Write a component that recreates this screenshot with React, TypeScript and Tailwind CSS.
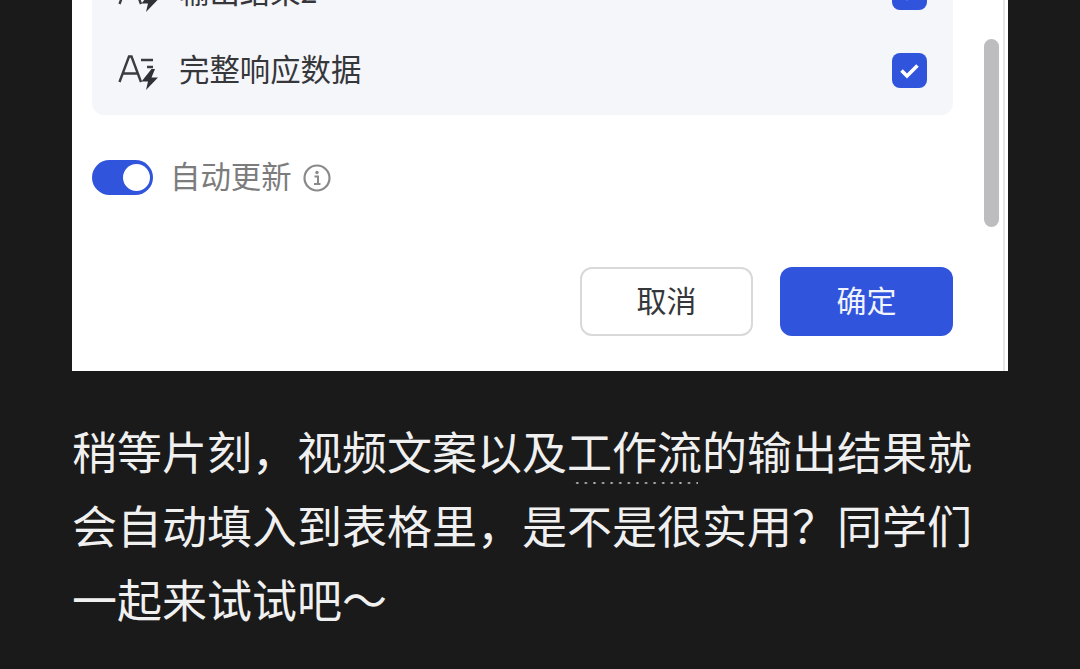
const cjk = "font-['Noto_Sans_CJK_SC','Noto_Sans',sans-serif]";

function FieldIcon() {
  return (
    <svg width="42" height="40" viewBox="0 0 42 40" fill="none" className="shrink-0">
      <path d="M2.5 32 L12 6.5 L14.5 6.5 L24 32 M6 23.5 H20.5" stroke="#3a3c40" strokeWidth="2.4" />
      <path d="M24 10 H36 M30 17 H36" stroke="#3a3c40" strokeWidth="2.4" />
      <path d="M34.5 19 L24.5 31.5 H31 L29 40 L41 27.5 H34.5 L38 19 Z" fill="#2f3136" />
    </svg>
  );
}

function CheckBox() {
  return (
    <div className="w-[35px] h-[35px] rounded-lg bg-[#3054dc] flex items-center justify-center">
      <svg width="21" height="17" viewBox="0 0 21 17" fill="none">
        <path d="M2.5 8.5 L8 14 L18.5 3.5" stroke="#fff" strokeWidth="3.6" />
      </svg>
    </div>
  );
}

function Row({ label }: { label: string }) {
  return (
    <div className="h-[78px] flex items-center justify-between pl-[25px] pr-[26px]">
      <div className="flex items-center gap-[20px]">
        <FieldIcon />
        <span className="pb-[4px] text-[30.4px] leading-none text-[#35373b]">{label}</span>
      </div>
      <CheckBox />
    </div>
  );
}

export default function App() {
  return (
    <div className={`h-[669px] w-[1080px] overflow-hidden bg-[#1a1a1a] ${cjk}`}>
      <div className="relative ml-[72px] w-[936px] h-[371px] overflow-hidden bg-white">
        <div className="-mt-[47px] pl-[20px] pr-[55px]">
          <div className="rounded-[12px] bg-[#f5f6f9] pb-[6px]">
            <Row label="输出结果2" />
            <Row label="完整响应数据" />
          </div>

          <div className="mt-[45px] flex items-center h-[35px]">
            <div className="w-[61px] h-[35px] rounded-full bg-[#3054dc] flex items-center justify-end pr-[3px]">
              <div className="w-[27px] h-[27px] rounded-full bg-white" />
            </div>
            <span className="ml-[17px] pb-[4px] text-[30.4px] leading-none text-[#7c7c7c]">自动更新</span>
            <svg width="28" height="28" viewBox="0 0 28 28" fill="none" className="ml-[11px]">
              <circle cx="14" cy="14" r="12.5" stroke="#8a8a8a" strokeWidth="2.2" />
              <circle cx="14" cy="8.5" r="1.7" fill="#8a8a8a" />
              <path d="M11.5 12.5 H15 V19.5 M11 20 H17.5" stroke="#8a8a8a" strokeWidth="2" />
            </svg>
          </div>

          <div className="mt-[72px] flex justify-end gap-[27px]">
            <button className="w-[173px] h-[69px] pb-[4px] rounded-[12px] border-2 border-[#d9d9d9] bg-white text-[30px] text-[#35373b]">
              取消
            </button>
            <button className="w-[173px] h-[69px] pb-[4px] rounded-[12px] bg-[#3054dc] text-[30px] text-[#f2f4fd]">
              确定
            </button>
          </div>
        </div>

        <div className="absolute left-[912px] top-[39px] w-[15px] h-[188px] rounded-full bg-[#bdbdbf]" />
        <div className="absolute left-[931px] top-0 w-[2px] h-full bg-[#e6e6e6]" />
      </div>

      <p className="mt-[43px] mx-[72px] text-[45px] leading-[74px] text-[#f0f0f0]">
        稍等片刻，视频文案以及
        <span className="relative">
          工作流
          <span className="absolute left-[6px] right-[4px] -bottom-[1px] h-[2px] bg-[radial-gradient(circle,#b5b5b5_1px,transparent_1.2px)] bg-[length:8.6px_2px]" />
        </span>
        的输出结果就会自动填入到表格里，是不是很实用？同学们一起来试试吧～
      </p>
    </div>
  );
}
